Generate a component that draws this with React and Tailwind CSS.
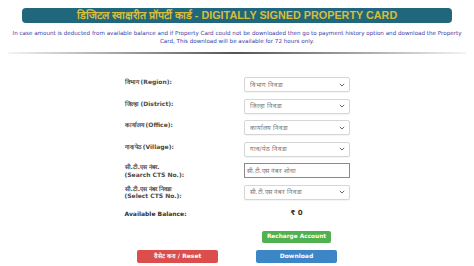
import React from 'react';

const rows = [
  { label: ['विभाग (Region):'], placeholder: 'विभाग निवडा' },
  { label: ['जिल्हा (District):'], placeholder: 'जिल्हा निवडा' },
  { label: ['कार्यालय (Office):'], placeholder: 'कार्यालय निवडा' },
  { label: ['गाव/पेठ (Village):'], placeholder: 'गाव/पेठ निवडा' },
  { label: ['सी.टी.एस नंबर.', '(Search CTS No.):'], placeholder: 'सी.टी.एस नंबर शोधा', input: true },
  { label: ['सी.टी.एस नंबर निवडा', '(Select CTS No.):'], placeholder: 'सी.टी.एस नंबर निवडा' },
];

const Chevron = () => (
  <svg width="6" height="4" viewBox="0 0 6 4" className="shrink-0">
    <path d="M0.8 0.8 L3 3 L5.2 0.8" fill="none" stroke="#666" strokeWidth="1" />
  </svg>
);

const PropertyCard = () => {
  return (
    <div className="w-[474px] h-[266px] bg-white overflow-hidden font-['DejaVu_Sans',sans-serif]">
      <div className="pt-[8px] px-[22px]">
        <div className="h-[15px] rounded-[4px] bg-[#21677c] flex items-center justify-center">
          <span className="text-[10.8px] font-bold text-[#d8bd3c] font-['Liberation_Sans',sans-serif] leading-none">
            डिजिटल स्वाक्षरीत प्रॉपर्टी कार्ड - DIGITALLY SIGNED PROPERTY CARD
          </span>
        </div>
      </div>

      <p className="mt-[6px] px-[6px] text-center text-[5.6px] leading-[8px] text-[#3b3ba3]">
        In case amount is deducted from available balance and if Property Card could not be downloaded then go to payment history option and download the Property Card, This download will be available for 72 hours only.
      </p>

      <div className="mt-[7px] mx-[8px] h-[2px] bg-gradient-to-r from-[#f4f4f4] via-[#555] to-[#f4f4f4]" />

      <div className="mt-[23px] mx-auto w-[225px] grid grid-cols-[119px_106px] gap-y-[6.5px]">
        {rows.map((row, i) => (
          <React.Fragment key={i}>
            <div className={`text-[6px] font-bold text-[#4a4a4a] ${row.label.length > 1 ? 'leading-[7.5px]' : 'leading-[9px]'}`}>
              {row.label.map((l, j) => (
                <div key={j}>{l}</div>
              ))}
            </div>
            {row.input ? (
              <div className="h-[15px] border border-[#8a8a8a] bg-white flex items-center px-[2px] text-[6.3px] text-[#777]">
                {row.placeholder}
              </div>
            ) : (
              <div className="h-[15px] border border-[#d6d6d6] rounded-[2px] bg-white flex items-center justify-between pl-[5px] pr-[4px] text-[6.3px] text-[#777] shadow-[0_1px_1px_rgba(0,0,0,0.05)]">
                <span>{row.placeholder}</span>
                <Chevron />
              </div>
            )}
          </React.Fragment>
        ))}
        <div className="h-[14px] flex items-center text-[6px] font-bold text-[#333]">Available Balance:</div>
        <div className="h-[14px] flex items-center justify-center text-[7px] font-bold text-[#333]">₹ 0</div>
        <div />
        <div className="flex justify-center pt-[4px]">
          <button className="w-[69px] h-[12px] rounded-[2px] bg-[#4fb14f] text-white text-[5.8px] font-bold leading-none">
            Recharge Account
          </button>
        </div>
      </div>

      <div className="mt-[7px] flex justify-center gap-[38px]">
        <button className="w-[81px] h-[13px] rounded-[2px] bg-[#da4e4b] text-white text-[6px] font-bold leading-none">
          रीसेट करा / Reset
        </button>
        <button className="w-[81px] h-[13px] rounded-[2px] bg-[#3c86c8] text-white text-[6px] font-bold leading-none">
          Download
        </button>
      </div>
    </div>
  );
};

export default function App() {
  return <PropertyCard />;
}
